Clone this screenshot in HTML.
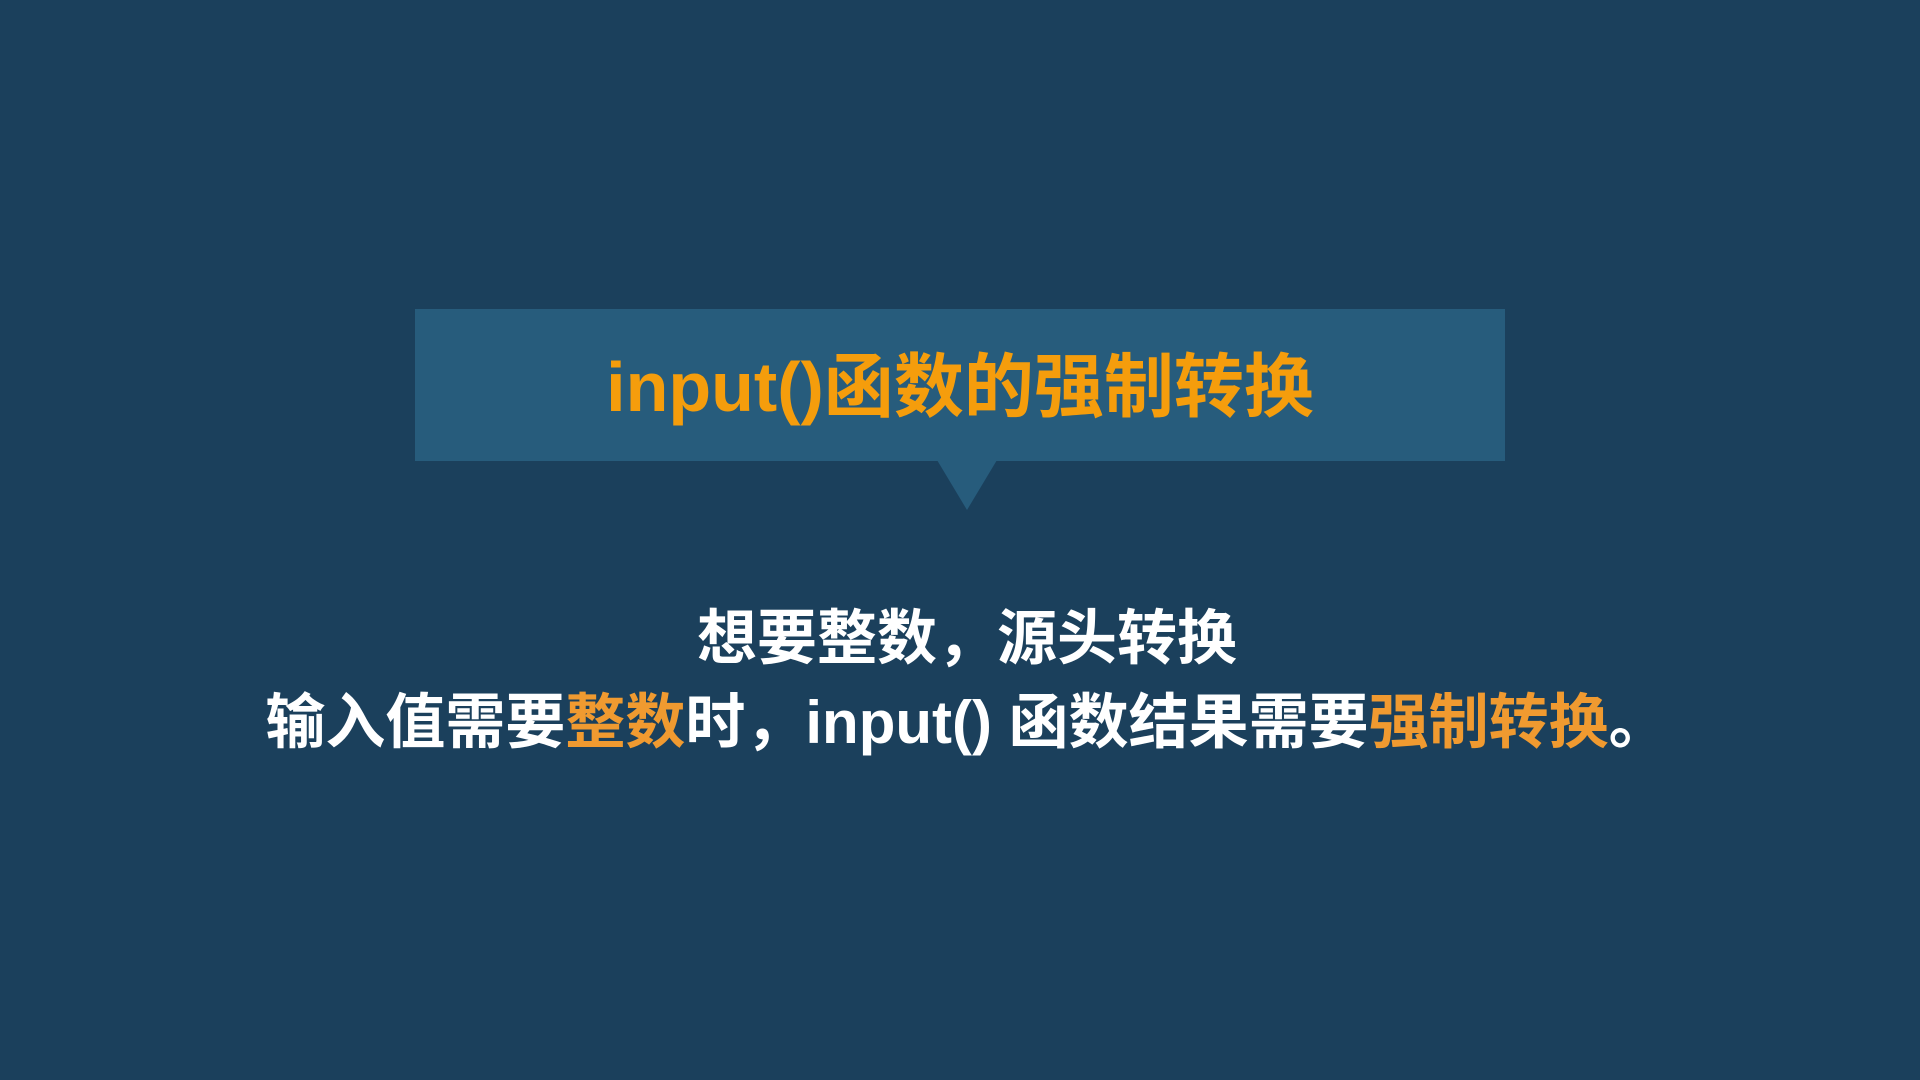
<!DOCTYPE html>
<html><head><meta charset="utf-8"><style>
html,body{margin:0;padding:0}
body{width:1920px;height:1080px;background:#1b405c;position:relative;overflow:hidden;font-family:"Liberation Sans","Noto Sans CJK SC",sans-serif;font-weight:bold}
.box{position:absolute;left:415px;top:309px;width:1090px;height:152px;background:#275c7c}
.tri{position:absolute;left:937px;top:460px;width:0;height:0;border-left:30px solid transparent;border-right:30px solid transparent;border-top:50px solid #275c7c}
.title{position:absolute;left:415px;width:1090px;top:345px;text-align:center;font-size:70px;line-height:84px;color:#f59d0c}
.l{position:absolute;left:7px;width:1920px;text-align:center;font-size:60px;line-height:72px;color:#fff}
.o{color:#f09a30}
</style></head><body>
<div class="box"></div><div class="tri"></div>
<div class="title">input()函数的强制转换</div>
<div class="l" style="top:603px">想要整数，源头转换</div>
<div class="l" style="top:687px">输入值需要<span class="o">整数</span>时，input() 函数结果需要<span class="o">强制转换</span>。</div>
</body></html>
